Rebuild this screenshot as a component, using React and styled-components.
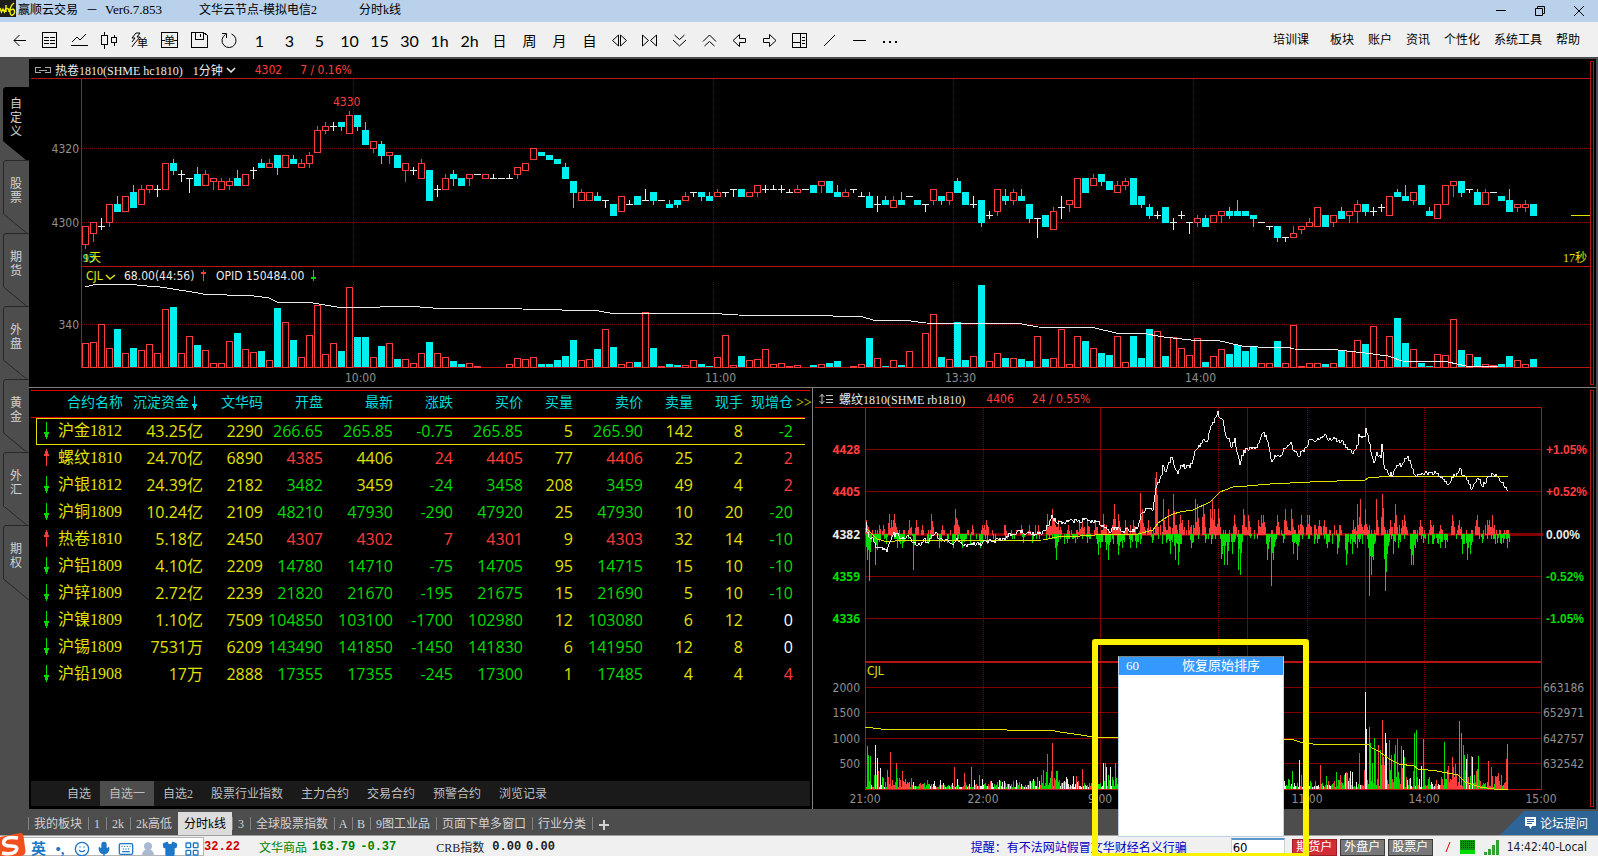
import React from 'react'
import styled, { createGlobalStyle, css } from 'styled-components';
import { Smile, Mic, Keyboard, Shirt, LayoutGrid, UserRound } from 'lucide-react';

const RED = '#ff3c3c';
const GREEN = '#00dc00';
const YELLOW = '#e1e100';
const CYAN = '#00f0f0';
const WHITE = '#ebebeb';
const LINE = '#b91414';
const GRID = '#820000';
const GRAY = '#909090';

const songti = "'Liberation Serif', 'Noto Sans CJK SC', serif";
const tahoma = "'DejaVu Sans Condensed', 'DejaVu Sans', sans-serif";
const yahei = "'Open Sans', 'Noto Sans CJK SC', sans-serif";

const GlobalStyle = createGlobalStyle`
*, *::before, *::after{
  box-sizing: border-box;
}
body{
  margin: 0;
  overflow: hidden;
  background: #000;
}
button{
  border: 0;
  padding: 0;
  margin: 0;
  background: none;
  color: inherit;
  font: inherit;
  cursor: pointer;
}
`

/* ---------- window frame ---------- */

const Window = styled.div`
position: relative;
display: flex;
flex-direction: column;
height: 100vh;
overflow: hidden;
font-family: ${songti};
font-size: 12px;
`

const TitleBar = styled.header`
display: flex;
align-items: flex-start;
height: 22px;
flex-shrink: 0;
background: #b9d1ea;
color: #000;
line-height: 20px;
white-space: nowrap;
`

const AppMark = styled.svg`
width: 16px;
height: 17px;
margin-right: 2px;
`

const TitleText = styled.span`
margin-right: ${props => props.$gap || '0'};
white-space: pre;
`

const Version = styled(TitleText)`
font-size: 13px;
`

const WindowButtons = styled.div`
display: flex;
margin-left: auto;
`

const WindowButton = styled.button`
width: 39px;
height: 22px;
display: flex;
align-items: center;
justify-content: center;
`

const Toolbar = styled.nav`
display: flex;
align-items: center;
height: 37px;
flex-shrink: 0;
padding: 0 18px 0 5px;
background: #f0f0f0;
border-bottom: 2px solid #4d4d4d;
color: #000;
`

const ToolButton = styled.button`
width: 30px;
height: 33px;
display: flex;
align-items: center;
justify-content: center;
padding: 2px 1px 0 0;
font-family: Lato, 'Noto Sans CJK SC', sans-serif;
font-weight: 400;
font-size: ${props => (props.$cjk ? '14px' : '16px')};
line-height: 20px;

svg{
  display: block;
  overflow: visible;
}
`

const Menu = styled.div`
display: flex;
gap: 14px;
margin-left: auto;

button:first-child{
  margin-right: 7px;
}
`

const MenuButton = styled.button`
font-size: 12px;
line-height: 32px;
white-space: nowrap;
`

const Body = styled.div`
display: flex;
flex: 1;
min-height: 0;
background: #4d4d4d;
padding-right: 2px;
`

const SideTabs = styled.div`
width: 29px;
flex-shrink: 0;
padding-top: 28px;
`

const SideTab = styled.button`
position: relative;
display: block;
width: 29px;
height: 73px;
padding: 0 7px 12px 10px;
color: #d2d2d2;
font-size: 12px;
line-height: 14px;

svg{
  position: absolute;
  left: 0;
  top: 0;
}
span{
  position: relative;
  display: block;
  width: 12px;
}
`

const Panes = styled.main`
flex: 1;
min-width: 0;
display: grid;
grid-template-columns: minmax(0, 1fr) minmax(0, 1fr);
grid-template-rows: minmax(0, 328fr) minmax(0, 421fr);
gap: 1px;
background: #808080;
`

const Pane = styled.section`
display: flex;
min-width: 0;
min-height: 0;
background: #000;
${props => props.$wide && css`grid-column: 1 / -1;`}
`

const PaneContent = styled.div`
flex: 1;
min-width: 0;
min-height: 0;
display: flex;
flex-direction: column;
`

const ScrollTrack = styled.div`
width: 4px;
margin: 2px 2px 2px 0;
border: 1px solid ${LINE};
`

const PaneHeader = styled.div`
display: flex;
align-items: center;
height: 19px;
flex-shrink: 0;
padding-left: 6px;
padding-top: 2px;
color: ${WHITE};
white-space: nowrap;
`

const Contract = styled.span`
margin: 0 ${props => props.$gap || '10px'} 0 ${props => props.$left || '5px'};
`

const PeriodButton = styled.button`
display: flex;
align-items: center;
gap: 3px;
margin-right: 19px;
`

const Quote = styled.span`
font-family: ${tahoma};
font-size: 12px;
color: ${RED};
margin-right: 18px;
`

const Chart = styled.svg`
display: block;
width: 100%;
flex: 1;
min-height: 0;
shape-rendering: crispEdges;

text{
  font-family: ${tahoma};
  font-size: 12px;
}
`

/* ---------- quote table ---------- */

const QuotePane = styled.div`
flex: 1;
min-width: 0;
display: flex;
flex-direction: column;
padding: 2px 2px 3px;
`

const TableArea = styled.div`
flex: 1;
min-height: 0;
border-top: 1px solid #dc0000;
padding-right: 5px;
`

const Table = styled.table`
width: 100%;
table-layout: fixed;
border-collapse: collapse;
font-family: ${yahei};
font-size: 16px;
`

const Th = styled.th`
height: 26px;
padding: 0 0 2px;
border-bottom: 1px solid #dc0000;
color: #00dcdc;
font-family: ${songti};
font-size: 14px;
font-weight: 400;
line-height: 23px;
text-align: right;
white-space: nowrap;

button{
  padding-left: 3px;
  color: ${props => props.$color || 'inherit'};
}
svg{
  margin: 0 5px 0 2px;
  vertical-align: -3px;
}
`

const Td = styled.td`
height: 27px;
padding: 0 0 1px;
color: ${props => props.$color};
line-height: 26px;
text-align: right;
white-space: nowrap;
`

const NameTd = styled(Td)`
padding-left: 7px;
font-family: ${songti};
text-align: left;

svg{
  margin-right: 8px;
  vertical-align: -3px;
}
`

const Tr = styled.tr`
${props => props.$active && css`
td:not(:first-child){
  box-shadow: inset 0 1px ${YELLOW}, inset 0 -1px ${YELLOW};
}
td:nth-child(2){
  box-shadow: inset 0 1px ${YELLOW}, inset 0 -1px ${YELLOW}, inset 1px 0 ${YELLOW};
}
`}
`

const ListTabs = styled.div`
display: flex;
height: 25px;
padding-left: 27px;
background: #1a1a1a;
color: #bebebe;
`

const ListTab = styled.button`
padding: 0 9px;
font-size: 12px;
line-height: 24px;
background: ${props => (props.$active ? '#4d4d4d' : 'transparent')};
`

/* ---------- bottom bars ---------- */

const WorkspaceBar = styled.div`
display: flex;
align-items: flex-end;
height: 26px;
flex-shrink: 0;
padding-left: 28px;
background: #4d4d4d;
color: #d2d2d2;
`

const WorkspaceTab = styled.button`
width: ${props => (props.$narrow ? '18px' : 'auto')};
padding: 0 ${props => (props.$narrow ? '0' : '6px')};
height: 23px;
font-size: 12px;
line-height: 22px;
white-space: nowrap;
background: linear-gradient(#828282, #828282) left 5px / 1px 13px no-repeat;
${props => props.$active && css`
background: #dcdcdc;
color: #000;
`}
`

const ForumLink = styled.a`
display: flex;
align-items: center;
gap: 4px;
height: 24px;
margin-left: auto;
padding: 0 10px 0 25px;
background: #2f6596;
clip-path: polygon(24px 0, 100% 0, 100% 100%, 0 100%);
color: #fff;
font-size: 12px;
text-decoration: none;
`

const StatusBar = styled.footer`
display: flex;
align-items: center;
height: 21px;
flex-shrink: 0;
padding-top: 2px;
background: #f0f0f0;
border-top: 1px solid #a0a0a0;
color: #202020;
white-space: nowrap;
`

const InputMethod = styled.div`
display: flex;
align-items: center;
gap: 6px;
align-self: flex-end;
position: relative;
width: 204px;
height: 19px;
padding: 5px 0 0 31px;
background: #fff;
border: 1px solid #b4b4b4;
border-left: 0;
color: #1e78c8;
font-weight: 700;
font-size: 15px;
line-height: 14px;

svg{
  flex-shrink: 0;
}
`

const SLogo = styled.svg`
position: absolute;
left: 0;
bottom: -1px;
`

const Punct = styled.span`
width: 16px;
text-align: center;
`

const Ticker = styled.span`
color: ${props => props.$color};
margin-right: ${props => props.$gap || '5px'};
`

const TickerValue = styled(Ticker)`
font-family: 'Liberation Mono', monospace;
font-weight: 700;
font-size: 12px;
`

const Notice = styled.span`
margin-left: auto;
color: #0000be;
`

const CodeInput = styled.input`
width: 54px;
height: 18px;
align-self: flex-end;
margin: 0 7px 0 44px;
padding: 0 1px;
border: 1px solid #c8d2dc;
border-top: 2px solid #5a96c8;
background: #fff;
font-family: ${tahoma};
font-size: 13px;
outline: 0;
`

const AccountButton = styled.button`
width: 45px;
height: 17px;
align-self: flex-end;
margin-right: 3px;
background: ${props => props.$bg};
border: 1px solid ${props => props.$edge};
color: #fff;
font-size: 12px;
line-height: 15px;
`

const Clock = styled.span`
font-family: ${tahoma};
font-size: 12px;
margin: 0 11px 0 8px;
`

const StatusIcon = styled.svg`
margin-left: 9px;
`

/* keyboard wizard popup with its marker frame */

const Popup = styled.div`
position: absolute;
right: 314px;
bottom: 19px;
width: 166px;
height: 181px;
background: #fff;
border: 1px solid #bed2e6;
border-top-color: #808080;
`

const PopupRow = styled.button`
display: flex;
width: 100%;
height: 18px;
padding: 0 7px;
background: #3399ff;
color: #fff;
font-size: 13px;
line-height: 18px;

span:first-child{
  width: 56px;
  text-align: left;
}
`

const Marker = styled.div`
position: absolute;
right: 289px;
bottom: -3px;
width: 217px;
height: 220px;
border: 6px solid #fff200;
border-radius: 3px;
pointer-events: none;
`

/* ---------- toolbar icons ---------- */

const Icon = ({ d, size = 17, crisp = true, children }) => (
  <svg width={size} height={size} viewBox="0 0 17 17" fill="none" stroke="#000" shapeRendering={crisp ? 'crispEdges' : 'auto'} aria-hidden="true">
    {d && <path d={d} />}
    {children}
  </svg>
)

const tools = [
  ['返回', <Icon crisp={false} d="M15 8.5H3M8.5 3L3 8.5L8.5 14" />],
  ['列表', <Icon d="M1.5 .5h14v15h-14zM3 5.5h5M3 8.5h5M3 11.5h5M9 5.5h5M9 8.5h5M9 11.5h5" />],
  ['分时图', <Icon crisp={false} d="M1 10L6 5L9 8L15 2M0 13.5H17" />],
  ['K线图', <Icon d="M.5 3.5h6v9h-6zM3.5 0v3M3.5 13v4M10.5 5.5h5v5h-5zM13.5 3v2M13.5 11v3" />],
  ['闪电下单', <Icon crisp={false} d="M5 1L1 6h3L1 10M5 1h4L6 5h3L3 12L1 15"><text x="6" y="15" fontSize="11" fontFamily="Noto Sans CJK SC" fill="#000" stroke="none">单</text></Icon>],
  ['下单', <Icon d="M.5 .5h16v15h-16zM1 8.5h3M13 8.5h3"><text x="3" y="13" fontSize="11" fontFamily="Noto Sans CJK SC" fill="#000" stroke="none">单</text></Icon>],
  ['保存', <Icon d="M.5 .5h12l4 3v12h-16zM4.5 1v6h8v-6M9.5 2v3" />],
  ['刷新', <Icon crisp={false} d="M10.5 2A7 7 0 1 1 4.5 2.5M1 1.5h4.5V6" />],
  '1', '3', '5', '10', '15', '30', '1h', '2h', '日', '周', '月', '自',
  ['拉伸', <Icon crisp={false} d="M7.5 3L1.5 8.5L7.5 14zM9.5 3L15.5 8.5L9.5 14z" />],
  ['压缩', <Icon crisp={false} d="M1.5 3L7.5 8.5L1.5 14zM15.5 3L9.5 8.5L15.5 14z" />],
  ['下移', <Icon crisp={false} d="M3.5 3L8.5 7.5L13.5 3M2 8L8.5 14L15 8" />],
  ['上移', <Icon crisp={false} d="M2 9.5L8.5 3L15 9.5M3.5 14L8.5 9.5L13.5 14" />],
  ['左移', <Icon crisp={false} d="M2 8.5L8.5 2.5V6.5H14.5V10.5H8.5V14.5z" />],
  ['右移', <Icon crisp={false} d="M15 8.5L8.5 2.5V6.5H2.5V10.5H8.5V14.5z" />],
  ['布局', <Icon d="M1.5 1.5h14v14h-14zM9.5 2v13M2 10.5h7M11 5.5h3M11 8.5h3M11 11.5h3" />],
  ['斜线', <Icon crisp={false} d="M3 14L14 3" />],
  ['横线', <Icon d="M2 8.5H15" />],
  ['更多', <Icon><path d="M2 9h2v2h-2zM8 9h2v2h-2zM14 9h2v2h-2z" fill="#000" stroke="none" /></Icon>],
];

const Chevron = ({ color }) => (
  <svg width="10" height="6" viewBox="0 0 10 6" fill="none" stroke={color} strokeWidth="1.5" aria-hidden="true">
    <path d="M1 1L5 5L9 1" />
  </svg>
)

const Arrow = ({ up, color, height = 17 }) => (
  <svg width="7" height={height} viewBox="0 0 7 17" fill={color} shapeRendering="crispEdges" aria-hidden="true">
    <path d={up ? 'M3 0h1v17h-1zM2 2h3v3h1v2h-5v-2h1z' : 'M3 0h1v17h-1zM1 10h5v2h-1v3h-3v-3h-1z'} />
  </svg>
)

/* ---------- one minute chart ---------- */

// one entry per minute: kind, body top, body bottom, high, low (all counted from 4300)
const candles = `r-1,-6,-1,-7 r0,-3,0,-5 w-1,-1,1,-2 r5,0,5,-1 c5,3,7,3 r7,3,7,3 c8,4,10,4 r9,5,10,5 r10,9,10,8 w9,9,10,7
r16,9,16,9 c16,14,17,13 w13,13,14,11 w12,12,12,8 c13,10,15,10 r13,10,14,10 r12,11,12,9 r11,9,12,9 r11,10,12,9 c12,10,14,10
r13,10,13,10 w14,14,15,12 c16,15,17,15 r16,15,17,15 c18,15,18,13 r18,15,18,15 c17,16,18,16 r16,15,17,15 r18,16,19,15 r25,19,26,19
r26,25,27,24 w26,26,27,25 c27,26,27,25 r29,24,30,24 c29,26,29,25 c25,21,27,21 r22,20,22,19 c21,18,22,16 r19,18,19,16 c18,15,18,15
r16,14,16,11 w14,14,15,13 r16,12,17,12 c14,6,14,6 w9,9,10,7 r12,9,13,9 c13,12,14,10 c12,10,12,10 r13,12,13,10 w13,13,13,13
r13,12,13,12 w12,12,13,12 w12,12,12,12 w12,12,13,12 r15,13,15,12 r16,14,16,14 r20,17,20,17 c19,18,19,18 c18,17,18,17 c17,16,17,16
c15,12,16,12 c11,8,11,4 r8,6,9,6 r8,6,8,6 c7,6,8,6 w6,6,6,4 c5,2,5,2 r7,3,7,3 w5,5,6,5 c7,5,7,5
w6,6,9,6 c8,6,8,5 w6,6,6,6 c5,4,6,4 c6,5,6,4 r7,6,8,6 w8,8,8,7 c8,7,8,6 c7,6,8,6 r8,7,9,7
w8,8,8,7 w9,9,9,7 c9,7,9,7 r8,7,8,7 r10,8,10,7 w9,9,10,8 w9,9,10,9 w9,9,10,8 w8,8,9,8 r9,8,10,8
w9,9,9,9 c10,8,10,8 r11,10,11,8 c11,8,11,8 c8,7,10,7 r8,7,9,7 w9,9,9,8 w7,7,8,7 c7,4,8,4 w5,5,7,3
c6,5,7,5 r6,4,7,4 c6,5,8,5 w7,7,7,7 c6,5,6,5 w5,5,5,3 r9,6,9,5 c7,6,7,5 r8,6,8,5 c11,8,12,8
c8,5,8,5 w5,5,7,4 c6,0,6,-1 w2,2,3,1 r9,3,9,2 c7,6,9,5 r8,6,9,5 c7,6,9,6 c5,1,5,0 w1,1,1,-4
c2,-1,2,-1 r3,-2,4,-2 w4,4,7,1 r6,5,6,3 r12,4,12,4 c12,8,12,8 r12,10,13,10 c13,11,13,10 c11,9,11,9 r10,8,11,8
r11,10,12,9 c12,5,12,5 c7,5,7,4 c4,2,5,1 w2,2,3,1 c4,0,4,0 w0,0,1,-2 w2,2,3,1 w0,0,0,-3 r1,0,2,-1
c1,-1,2,-1 r2,0,2,0 r3,2,3,0 c3,2,4,1 c3,2,6,2 c3,2,3,2 c2,1,2,-1 w0,0,0,0 w-1,-1,-1,-2 c-1,-4,-1,-5
w-4,-4,-4,-5 r-3,-4,-1,-4 r-1,-2,-1,-3 r0,-1,1,-1 r4,-1,4,-1 c2,-1,2,-1 r2,0,2,-1 c3,1,4,1 r3,2,3,0 r5,3,6,0
c5,3,5,2 w3,3,4,2 w4,4,5,3 r7,2,7,2 c8,7,9,7 c7,6,10,6 r8,6,8,5 c10,5,10,5 c3,2,4,2 r5,1,5,1
r10,5,10,5 r11,10,11,7 c11,8,11,7 w9,9,9,8 c8,5,9,5 r8,5,9,5 w8,8,8,8 c7,6,7,6 c6,3,9,3 r5,4,5,3
r5,4,6,3 c5,2,5,2`.split(/\s+/).map(s => [s[0], ...s.slice(1).split(',').map(Number)]);

const volumes = [
  24, 25, 43, 19, 38, 14, 19, 17, 23, 14, 58, 60, 14, 31, 22, 17, 4, 4, 26, 34,
  18, 15, 16, 7, 59, 45, 27, 10, 32, 62, 13, 24, 16, 80, 30, 30, 10, 21, 24, 8,
  8, 4, 14, 25, 14, 10, 6, 3, 4, 1, 0, 0, 0, 3, 9, 8, 10, 3, 3, 7,
  11, 27, 7, 8, 18, 38, 20, 3, 5, 5, 55, 19, 1, 3, 2, 2, 7, 3, 1, 10,
  32, 2, 11, 7, 8, 18, 3, 4, 1, 2, 0, 2, 3, 4, 6, 0, 1, 3, 29, 9,
  1, 7, 2, 16, 0, 34, 53, 10, 8, 45, 7, 11, 82, 6, 14, 9, 9, 8, 6, 31,
  8, 9, 38, 3, 31, 26, 19, 14, 12, 31, 5, 31, 9, 38, 36, 11, 30, 19, 12, 29,
  5, 11, 18, 13, 22, 16, 20, 4, 4, 26, 4, 42, 1, 4, 4, 3, 4, 17, 16, 27,
  23, 41, 7, 31, 49, 24, 18, 4, 1, 13, 12, 48, 17, 13, 10, 3, 2, 3, 11, 7,
  3, 8,
];

const openInterest = '85,287 97,284 107,285 127,284 147,286 160,287 173,289 192,292 203,294 227,295 237,296 247,295 269,298 277,302 313,303 337,307 380,307 393,306 420,307 433,308 466,308 522,309 562,310 593,310 610,313 650,313 722,314 738,315 833,316 863,317 873,320 903,320 926,323 1022,324 1038,327 1095,328 1116,333 1141,333 1164,337 1191,340 1216,340 1242,346 1258,347 1287,347 1294,349 1338,350 1365,353 1388,356 1402,361 1448,362 1466,366 1498,367';

const priceY = v => Math.round(222 - v * 3.7);

const Candle = ({ x, data }) => {
  const [kind, top, bottom, high, low] = data;
  const color = { r: RED, c: CYAN, w: WHITE }[kind];
  const y1 = priceY(top);
  const y2 = priceY(bottom);
  return (
    <g fill={color}>
      {high > top && <rect x={x + 3} y={priceY(high)} width="1" height={y1 - priceY(high)} />}
      {low < bottom && <rect x={x + 3} y={y2} width="1" height={priceY(low) - y2 + 1} />}
      {kind === 'r'
        ? <rect x={x + 0.5} y={y1 + 0.5} width="6" height={y2 - y1} fill="#000" stroke={RED} />
        : <rect x={x} y={y1} width="7" height={y2 - y1 + 1} />}
    </g>
  )
}

const Volume = ({ x, kind, value }) => {
  if (!value) return null;
  if (kind === 'c') return <rect x={x} y={367 - value} width="7" height={value} fill={CYAN} />
  return <rect x={x + 0.5} y={367.5 - value} width="6" height={value} fill="none" stroke={RED} />
}

const MinuteChart = () => (
  <Chart viewBox="29 78 1561 309" role="img" aria-label="热卷1810 1分钟">
    <g stroke={GRID} strokeDasharray="1 1">
      {[148, 222, 324].map(y => <path key={y} d={`M82 ${y}.5H1590`} />)}
      {[353, 713, 953, 1193].map(x => <path key={x} d={`M${x}.5 79V266M${x}.5 282V367`} />)}
    </g>
    <path d="M31 78.5H1590M81.5 78V368M82 266.5H1590M81 367.5H1590" stroke={LINE} />
    {candles.map((c, i) => <Candle key={i} x={82 + i * 8} data={c} />)}
    {candles.map((c, i) => <Volume key={i} x={82 + i * 8} kind={c[0]} value={volumes[i]} />)}
    <polyline points={openInterest} fill="none" stroke={WHITE} />
    <path d="M1571 215.5H1590" stroke={YELLOW} />
    <g fill={GRAY}>
      <text x="79" y="153" textAnchor="end">4320</text>
      <text x="79" y="227" textAnchor="end">4300</text>
      <text x="79" y="329" textAnchor="end">340</text>
      <text x="345" y="382">10:00</text>
      <text x="705" y="382">11:00</text>
      <text x="945" y="382">13:30</text>
      <text x="1185" y="382">14:00</text>
    </g>
    <text x="333" y="106" fill={RED}>4330</text>
    <text x="83" y="262" fill={CYAN} style={{ fontFamily: songti }}>93</text>
    <text x="83" y="262" fill={YELLOW} style={{ fontFamily: songti }}>1天</text>
    <text x="1563" y="262" fill={YELLOW} style={{ fontFamily: songti }}>17秒</text>
    <text x="86" y="280" fill={YELLOW}>CJL</text>
    <path d="M106 275L110 279L115 275" fill="none" stroke={YELLOW} strokeWidth="1.5" shapeRendering="auto" />
    <text x="124" y="280" fill={WHITE}>68.00(44:56)</text>
    <path d="M203 270h1v11h-1zM201 272h5v2h-5z" fill={RED} />
    <text x="216" y="280" fill={WHITE}>OPID 150484.00</text>
    <path d="M313 270h1v11h-1zM311 277h5v2h-5z" fill={GREEN} />
  </Chart>
)

/* ---------- intraday chart ---------- */

const random = seed => () => {
  seed = (seed * 16807) % 2147483647;
  return seed / 2147483647;
}

// points are kept at a third of a pixel, measured from the pane corner
const parse = s => s.trim().split(/\s+/).map(p => p.split(',').map(Number));
const place = ([x, y]) => [Math.round(810 + x / 3), Math.round(385 + y / 3)];

const price = parse(`167,410 170,440 180,460 190,460 198,488 205,490 215,487 222,490 230,500 240,470 250,450 262,448 272,458 285,460 300,455
310,472 325,480 335,472 342,462 355,470 370,452 380,445 388,462 400,465 412,462 420,475 430,480 440,460 450,470 460,480 480,478 500,475
512,482 525,465 545,468 575,465 590,452 610,448 628,437 645,447 680,448 700,438 715,420 727,390 738,412 760,412 800,408 812,412 825,400
840,408 860,408 875,425 890,432 900,445 915,425 935,442 950,430 965,440 985,425 995,385 1005,378 1015,370 1028,375 1037,310 1045,290
1055,270 1060,240 1068,260 1075,240 1085,215 1092,240 1105,268 1115,240 1140,248 1157,195 1170,185 1178,165 1190,170 1205,120 1215,100
1225,78 1230,100 1238,105 1245,140 1255,160 1265,185 1275,160 1282,200 1290,240 1297,210 1312,190 1335,192 1350,165 1362,142 1375,170
1385,230 1395,210 1415,210 1425,190 1443,172 1452,195 1463,213 1475,197 1490,185 1497,165 1520,165 1543,153 1550,160 1575,163 1580,172
1600,168 1608,190 1625,205 1635,195 1643,180 1648,148 1665,155 1667,128 1675,150 1682,200 1692,235 1702,200 1713,218 1717,178 1723,240
1735,265 1748,270 1760,240 1775,240 1793,213 1805,250 1818,272 1840,268 1860,262 1880,268 1895,275 1910,298 1930,280 1940,265 1950,250
1960,270 1972,285 1985,312 1997,290 2005,280 2020,305 2030,280 2048,268 2065,275 2075,290 2093,314`).map(place);

const average = parse(`167,430 180,440 200,462 235,472 255,467 700,466 740,457 810,453 900,448 985,446 1030,435 1045,415 1070,395 1090,388
1110,381 1150,376 1200,350 1230,322 1270,307 1310,302 1380,296 1500,291 1580,287 1665,286 1675,280 1740,274 2093,274`).map(place);

const buySpikes = parse(`169,402 206,417 218,417 238,385 243,402 250,402 253,385 298,402 318,402 335,417 362,385 396,417 436,370 441,402 485,417
516,417 522,417 528,402 585,417 633,417 656,417 685,417 712,385 718,402 727,370 733,400 745,402 775,417 808,402 815,402 830,402 855,402
880,385 913,355 925,385 945,402 970,402 991,320 997,370 1015,402 1036,275 1039,258 1060,340 1073,370 1088,325 1111,388 1117,402 1135,402
1155,340 1160,355 1178,355 1200,370 1207,340 1213,370 1225,370 1273,388 1298,370 1303,388 1315,388 1345,402 1352,388 1360,388 1402,388
1426,370 1443,370 1473,388 1490,388 1497,388 1516,417 1528,402 1543,402 1590,417 1630,402 1640,355 1650,340 1665,370 1698,340 1717,325
1741,402 1756,355 1775,402 1783,388 1831,402 1860,402 1890,417 1927,388 1947,402 1997,402 2002,388 2030,402 2038,402 2047,388 2083,432`).map(place);

const sellSpikes = parse(`172,525 178,587 196,540 202,495 228,475 262,490 277,490 310,555 350,475 387,490 410,475 430,490 455,490 510,490
640,475 665,475 739,525 770,475 795,475 832,475 863,510 870,490 888,495 895,525 925,510 935,490 960,490 977,490 1025,475 1068,475 1080,507
1096,525 1105,540 1143,490 1185,475 1233,522 1237,507 1243,540 1252,540 1265,507 1285,555 1289,570 1320,460 1372,525 1384,602 1390,525
1418,475 1450,507 1462,525 1520,475 1550,490 1582,507 1607,540 1625,507 1640,490 1678,632 1683,570 1690,525 1725,617 1730,507 1748,507
1765,490 1803,540 1808,540 1815,490 1840,475 1880,475 1890,490 1905,490 1955,507 1972,525 1980,507 2015,475 2060,475 2070,475 2080,475 2092,490`).map(place);

const spread = (spikes, seed) => {
  const next = random(seed);
  const bars = {};
  const put = (x, h) => { bars[x] = Math.max(bars[x] || 0, h) };
  for (let x = 866; x < 1509; x++) {
    const n = next();
    if (n > 0.76) put(x, 5);
    if (n > 0.96) put(x, 10);
  }
  spikes.forEach(([x, y]) => {
    const h = Math.abs(y - 534);
    put(x, h);
    put(x + 1, Math.round(h * (0.3 + next() * 0.4)));
    put(x - 1, Math.round(h * next() * 0.6));
    if (h > 12) put(x + 2, 8);
  });
  return Object.entries(bars).map(([x, h]) => [Number(x), h]);
}

const jitter = (points, seed) => {
  const next = random(seed);
  const out = [];
  points.forEach(([x, y], i) => {
    out.push(`${x},${y}`);
    const to = points[i + 1];
    if (!to) return;
    for (let k = x + 1; k < to[0]; k++) {
      const t = (k - x) / (to[0] - x);
      out.push(`${k},${Math.round(y + (to[1] - y) * t + (next() - 0.5) * 5)}`);
    }
  });
  return out.join(' ');
}

const buyBars = spread(buySpikes, 17);
const sellBars = spread(sellSpikes, 91);

const volumeSpikes = [
  [867, 43, 'g'], [868, 34, 'g'], [875, 44, 'w'], [877, 31, 'w'], [890, 37, 'r'], [896, 20, 'g'], [954, 22, 'r'], [971, 22, 'g'], [964, 16, 'r'],
  [979, 14, 'g'], [1047, 35, 'r'], [1052, 46, 'r'], [1056, 18, 'g'], [1082, 20, 'r'], [1103, 26, 'w'], [1105, 26, 'g'], [1115, 26, 'g'],
  [1292, 18, 'g'], [1299, 29, 'w'], [1301, 14, 'r'], [1320, 24, 'r'], [1336, 17, 'g'], [1350, 18, 'w'], [1359, 36, 'r'], [1365, 97, 'w'],
  [1366, 60, 'w'], [1369, 62, 'g'], [1370, 46, 'g'], [1375, 38, 'r'], [1382, 69, 'r'], [1385, 56, 'w'], [1386, 46, 'w'], [1391, 30, 'g'],
  [1395, 44, 'r'], [1401, 43, 'r'], [1403, 39, 'w'], [1414, 56, 'g'], [1416, 59, 'g'], [1423, 50, 'g'], [1444, 47, 'g'], [1455, 25, 'r'],
  [1459, 68, 'g'], [1461, 56, 'g'], [1464, 34, 'g'], [1466, 30, 'w'], [1471, 33, 'r'], [1472, 32, 'w'], [1488, 28, 'r'], [1506, 30, 'r'], [1507, 45, 'g'],
];

// [from x, average height, colours]
const volumeZones = [
  [866, 18, 'ggwr'], [885, 12, 'rrg'], [912, 5, 'grw'], [1040, 10, 'rgg'], [1060, 8, 'wwrg'], [1095, 18, 'gwg'],
  [1280, 6, 'rgw'], [1340, 12, 'rwg'], [1366, 34, 'gggr'], [1384, 30, 'grr'], [1405, 12, 'gwr'], [1440, 18, 'rgrr'], [1455, 26, 'rrwg'], [1480, 11, 'grr'],
];

const volumeBars = (() => {
  const next = random(2024);
  const bars = [];
  for (let x = 866; x < 1508; x++) {
    const [, h, colors] = volumeZones.filter(z => z[0] <= x).pop();
    bars.push([x, 2 + Math.round(h * next() * next() * 2), colors[Math.floor(next() * colors.length)]]);
  }
  return bars.concat(volumeSpikes);
})();

const barColor = { r: RED, g: GREEN, w: WHITE };

const holding = '865,727 881,729 979,729 1007,730 1022,730 1050,730 1060,732 1081,735 1093,737 1117,737 1284,739 1294,740 1300,742 1313,744 1368,744 1372,748 1380,752 1389,759 1399,764 1414,766 1418,769 1437,771 1458,775 1465,782 1480,787 1494,789 1508,789';

const scale = [
  [449, '4428', '+1.05%', RED],
  [491, '4405', '+0.52%', RED],
  [534, '4382', '0.00%', WHITE],
  [576, '4359', '-0.52%', GREEN],
  [618, '4336', '-1.05%', GREEN],
];

const volumeScale = [
  [687, '2000', '663186'],
  [712, '1500', '652971'],
  [738, '1000', '642757'],
  [763, '500', '632542'],
];

const hours = [[865, '21:00'], [983, '22:00'], [1100, '9:00'], [1307, '11:00'], [1424, '14:00'], [1541, '15:00']];

const IntradayChart = () => (
  <Chart viewBox="813 407 777 402" role="img" aria-label="螺纹1810 分时">
    <g stroke={GRID}>
      {[449, 491, 576, 618, 687, 712, 738, 763].map(y => <path key={y} d={`M866 ${y}.5H1541`} />)}
      {[1100, 1247, 1365].map(x => <path key={x} d={`M${x}.5 408V789`} />)}
      {[983, 1218, 1307, 1424].map(x => <path key={x} d={`M${x}.5 408V789`} strokeDasharray="1 1" />)}
      <path d="M866 534.5H1543" strokeWidth="3" />
    </g>
    <path d="M815 407.5H1542M865.5 407V790M1541.5 407V790M865 789.5H1542" stroke={LINE} />
    <path d="M865 662H1542" stroke={LINE} strokeWidth="2" />
    {buyBars.map(([x, h]) => <rect key={x} x={x} y={535 - h} width="1" height={h} fill={RED} />)}
    {sellBars.map(([x, h]) => <rect key={x} x={x} y="534" width="1" height={h} fill={GREEN} />)}
    {volumeBars.map(([x, h, c], i) => <rect key={i} x={x} y={789 - h} width="1" height={h} fill={barColor[c]} />)}
    <g fill="none">
      <polyline points={average.map(p => p.join(',')).join(' ')} stroke={YELLOW} />
      <polyline points={jitter(price, 5)} stroke={WHITE} />
      <polyline points={holding} stroke={YELLOW} />
    </g>
    {scale.map(([y, left, right, color]) => (
      <g key={y} fill={color} fontWeight="700">
        <text x="860" y={y + 5} textAnchor="end" style={{ fontFamily: 'Open Sans' }}>{left}</text>
        <text x="1546" y={y + 5} style={{ fontFamily: 'Liberation Sans' }}>{right}</text>
      </g>
    ))}
    <g fill={GRAY}>
      {volumeScale.map(([y, left, right]) => (
        <g key={y}>
          <text x="860" y={y + 5} textAnchor="end">{left}</text>
          <text x="1543" y={y + 5}>{right}</text>
        </g>
      ))}
      {hours.map(([x, label]) => <text key={x} x={x} y="803" textAnchor="middle">{label}</text>)}
    </g>
    <text x="867" y="675" fill={YELLOW}>CJL</text>
  </Chart>
)

/* ---------- quotes ---------- */

const columns = [5, 87, 80, 60, 60, 70, 60, 70, 50, 70, 50, 50, 50, 12];
const headings = ['文华码', '开盘', '最新', '涨跌', '买价', '买量', '卖价', '卖量', '现手', '现增仓'];

// trailing letters: colours of open, last, change, bid, ask, position change
const quotes = [
  ['沪金1812', 0, '43.25亿', '2290', '266.65', '265.85', '-0.75', '265.85', '5', '265.90', '142', '8', '-2', 'gggggg'],
  ['螺纹1810', 1, '24.70亿', '6890', '4385', '4406', '24', '4405', '77', '4406', '25', '2', '2', 'ryrrrr'],
  ['沪银1812', 0, '24.39亿', '2182', '3482', '3459', '-24', '3458', '208', '3459', '49', '4', '2', 'gygggr'],
  ['沪铜1809', 0, '10.24亿', '2109', '48210', '47930', '-290', '47920', '25', '47930', '10', '20', '-20', 'gggggg'],
  ['热卷1810', 1, '5.18亿', '2450', '4307', '4302', '7', '4301', '9', '4303', '32', '14', '-10', 'rrrrrg'],
  ['沪铝1809', 0, '4.10亿', '2209', '14780', '14710', '-75', '14705', '95', '14715', '15', '10', '-10', 'gggggg'],
  ['沪锌1809', 0, '2.72亿', '2239', '21820', '21670', '-195', '21675', '15', '21690', '5', '10', '-10', 'gggggg'],
  ['沪镍1809', 0, '1.10亿', '7509', '104850', '103100', '-1700', '102980', '12', '103080', '6', '12', '0', 'gggggw'],
  ['沪锡1809', 0, '7531万', '6209', '143490', '141850', '-1450', '141830', '6', '141950', '12', '8', '0', 'gggggw'],
  ['沪铅1908', 0, '17万', '2888', '17355', '17355', '-245', '17300', '1', '17485', '4', '4', '4', 'gggggr'],
];

const tone = { r: RED, g: GREEN, y: YELLOW, w: '#fff' };

const QuoteTable = () => (
  <Table>
    <colgroup>
      {columns.map((w, i) => <col key={i} style={{ width: `${w / 7.74}%` }} />)}
    </colgroup>
    <thead>
      <tr>
        <Th />
        <Th>合约名称</Th>
        <Th>沉淀资金<Arrow color="#00dcdc" height={14} /></Th>
        {headings.map(h => <Th key={h}>{h}</Th>)}
        <Th $color={YELLOW}><button aria-label="更多列">&gt;&gt;</button></Th>
      </tr>
    </thead>
    <tbody>
      {quotes.map(([name, up, fund, code, open, last, change, bid, bidQty, ask, askQty, hand, diff, c], i) => (
        <Tr key={name} $active={i === 0}>
          <Td />
          <NameTd $color={YELLOW}><Arrow up={up} color={up ? RED : GREEN} />{name}</NameTd>
          <Td $color={YELLOW}>{fund}</Td>
          <Td $color={YELLOW}>{code}</Td>
          <Td $color={tone[c[0]]}>{open}</Td>
          <Td $color={tone[c[1]]}>{last}</Td>
          <Td $color={tone[c[2]]}>{change}</Td>
          <Td $color={tone[c[3]]}>{bid}</Td>
          <Td $color={YELLOW}>{bidQty}</Td>
          <Td $color={tone[c[4]]}>{ask}</Td>
          <Td $color={YELLOW}>{askQty}</Td>
          <Td $color={YELLOW}>{hand}</Td>
          <Td $color={tone[c[5]]}>{diff}</Td>
          <Td />
        </Tr>
      ))}
    </tbody>
  </Table>
)

const sideTabs = ['自定义', '股票', '期货', '外盘', '黄金', '外汇', '期权'];
const menus = ['培训课', '板块', '账户', '资讯', '个性化', '系统工具', '帮助'];
const lists = ['自选', '自选一', '自选2', '股票行业指数', '主力合约', '交易合约', '预警合约', '浏览记录'];
const workspaces = ['我的板块', '1', '2k', '2k高低', '分时k线', '3', '全球股票指数', 'A', 'B', '9图工业品', '页面下单多窗口', '行业分类'];

const App = () => {
  return (
    <Window>
      <GlobalStyle />

      <TitleBar>
        <AppMark viewBox="0 0 16 17">
          <rect width="16" height="17" fill="#1e1e1e" />
          <path d="M0 8l1.5 4l1.5-3l1.5 3l1.5-4M6 5v7M6 9q3-2 3 3M14 3q-4 3-4 8t2.5 4t2-4t-3.5-1" stroke="#f5f500" strokeWidth="1.4" fill="none" />
        </AppMark>
        <TitleText $gap="8px">赢顺云交易</TitleText>
        <TitleText $gap="7px">－</TitleText>
        <Version $gap="37px">Ver6.7.853</Version>
        <TitleText $gap="42px">文华云节点-模拟电信2</TitleText>
        <TitleText>分时k线</TitleText>
        <WindowButtons>
          <WindowButton aria-label="最小化"><svg width="10" height="10" stroke="#000"><path d="M0 4.5H10" /></svg></WindowButton>
          <WindowButton aria-label="还原"><svg width="10" height="10" fill="none" stroke="#000"><path d="M.5 2.5h7v7h-7zM2.5 2.5v-2h7v7h-2" /></svg></WindowButton>
          <WindowButton aria-label="关闭"><svg width="10" height="10" stroke="#000"><path d="M0 0L10 10M10 0L0 10" /></svg></WindowButton>
        </WindowButtons>
      </TitleBar>

      <Toolbar>
        {tools.map(t => (
          typeof t === 'string'
            ? <ToolButton key={t} $cjk={t > '一'}>{t}</ToolButton>
            : <ToolButton key={t[0]} aria-label={t[0]}>{t[1]}</ToolButton>
        ))}
        <Menu>
          {menus.map(m => <MenuButton key={m}>{m}</MenuButton>)}
        </Menu>
      </Toolbar>

      <Body>
        <SideTabs>
          {sideTabs.map((t, i) => (
            <SideTab key={t}>
              <svg width="29" height="76" viewBox="0 0 29 76" fill={i === 0 ? '#000' : '#4d4d4d'} stroke={i === 0 ? '#000' : '#282828'} aria-hidden="true">
                <path d="M30 .5H6Q3.5 .5 3.5 3V54L29 75" />
              </svg>
              <span>{t}</span>
            </SideTab>
          ))}
        </SideTabs>

        <Panes>
          <Pane $wide>
            <PaneContent>
              <PaneHeader>
                <svg width="16" height="6" viewBox="0 0 16 6" fill="none" stroke="#aaa" shapeRendering="crispEdges" aria-hidden="true">
                  <path d="M6 .5H.5v5H6M10 .5h5.5v5H10M4 3h8" />
                </svg>
                <Contract $left="4px">热卷1810(SHME hc1810)</Contract>
                <PeriodButton>1分钟<Chevron color={WHITE} /></PeriodButton>
                <Quote>4302</Quote>
                <Quote>7 / 0.16%</Quote>
              </PaneHeader>
              <MinuteChart />
            </PaneContent>
            <ScrollTrack />
          </Pane>

          <Pane>
            <QuotePane>
              <TableArea>
                <QuoteTable />
              </TableArea>
              <ListTabs>
                {lists.map(l => <ListTab key={l} $active={l === '自选一'}>{l}</ListTab>)}
              </ListTabs>
            </QuotePane>
          </Pane>

          <Pane>
            <PaneContent>
              <PaneHeader>
                <svg width="14" height="10" viewBox="0 0 14 10" fill="none" stroke="#c8c8c8" aria-hidden="true">
                  <path d="M3 0v10M.5 3L3 .5L5.5 3M.5 7L3 9.5L5.5 7M7 1.5h7M7 5.5h7M7 8.5h7" />
                </svg>
                <Contract $left="6px" $gap="21px">螺纹1810(SHME rb1810)</Contract>
                <Quote>4406</Quote>
                <Quote>24 / 0.55%</Quote>
              </PaneHeader>
              <IntradayChart />
            </PaneContent>
            <ScrollTrack />
          </Pane>
        </Panes>
      </Body>

      <WorkspaceBar>
        {workspaces.map(w => <WorkspaceTab key={w} $narrow={w.length === 1} $active={w === '分时k线'}>{w}</WorkspaceTab>)}
        <WorkspaceTab aria-label="新建">
          <svg width="12" height="12" stroke="#d2d2d2" strokeWidth="2" style={{ verticalAlign: 'middle' }}><path d="M1 6H11M6 1V11" /></svg>
        </WorkspaceTab>
        <ForumLink href="#forum">
          <svg width="11" height="12" viewBox="0 0 11 12" aria-hidden="true">
            <path d="M0 0h11v9H7L5.5 12L4 9H0z" fill="#fff" />
            <path d="M2 2.5h7M2 4.5h7M2 6.5h5" stroke="#2f6596" />
          </svg>
          论坛提问
        </ForumLink>
      </WorkspaceBar>

      <StatusBar>
        <InputMethod>
          <SLogo width="26" height="23" viewBox="0 0 26 23" aria-hidden="true">
            <path d="M0 4L20 0q3 0 3.5 3l2 15q0 4-4 5H0z" fill="#f0501e" />
            <path d="M18 5Q6 3 4 8t7 5t4 6q-4 3-13 1" fill="none" stroke="#fff" strokeWidth="3.5" />
          </SLogo>
          英
          <Punct>•,</Punct>
          <Smile size={16} />
          <Mic size={16} fill="#1e78c8" />
          <Keyboard size={16} />
          <UserRound size={16} color="#aab9d2" fill="#aab9d2" />
          <Shirt size={16} fill="#1e78c8" />
          <LayoutGrid size={16} />
        </InputMethod>
        <TickerValue $color="#d20000" $gap="19px">32.22</TickerValue>
        <Ticker $color="#008200">文华商品</Ticker>
        <TickerValue $color="#008200">163.79</TickerValue>
        <TickerValue $color="#008200" $gap="40px">-0.37</TickerValue>
        <Ticker $gap="8px">CRB指数</Ticker>
        <TickerValue>0.00</TickerValue>
        <TickerValue>0.00</TickerValue>
        <Notice>提醒：有不法网站假冒文华财经名义行骗</Notice>
        <CodeInput aria-label="键盘精灵" defaultValue="60" />
        <AccountButton $bg="#d22d37" $edge="#a01e28">期货户</AccountButton>
        <AccountButton $bg="#787878" $edge="#3c3c3c">外盘户</AccountButton>
        <AccountButton $bg="#787878" $edge="#3c3c3c">股票户</AccountButton>
        <StatusIcon width="6" height="12" stroke="#e60000" aria-hidden="true"><path d="M5 1L1 11" /></StatusIcon>
        <StatusIcon width="15" height="14" aria-hidden="true">
          <rect width="15" height="14" fill="#00dc00" />
          <rect width="15" height="10" fill="#0f960f" />
          <path d="M1 1.5h14M1 3.5h14M1 5.5h14M1 7.5h14" stroke="#0a320a" strokeDasharray="1 1" />
        </StatusIcon>
        <StatusIcon width="15" height="15" fill="#32a032" aria-hidden="true">
          <path d="M0 12h3v3h-3zM4 9h3v6h-3zM8 5h3v10h-3zM12 0h3v15h-3z" />
        </StatusIcon>
        <Clock>14:42:40-Local</Clock>
      </StatusBar>

      <Popup>
        <PopupRow><span>60</span><span>恢复原始排序</span></PopupRow>
      </Popup>
      <Marker />
    </Window>
  )
}

export default App
